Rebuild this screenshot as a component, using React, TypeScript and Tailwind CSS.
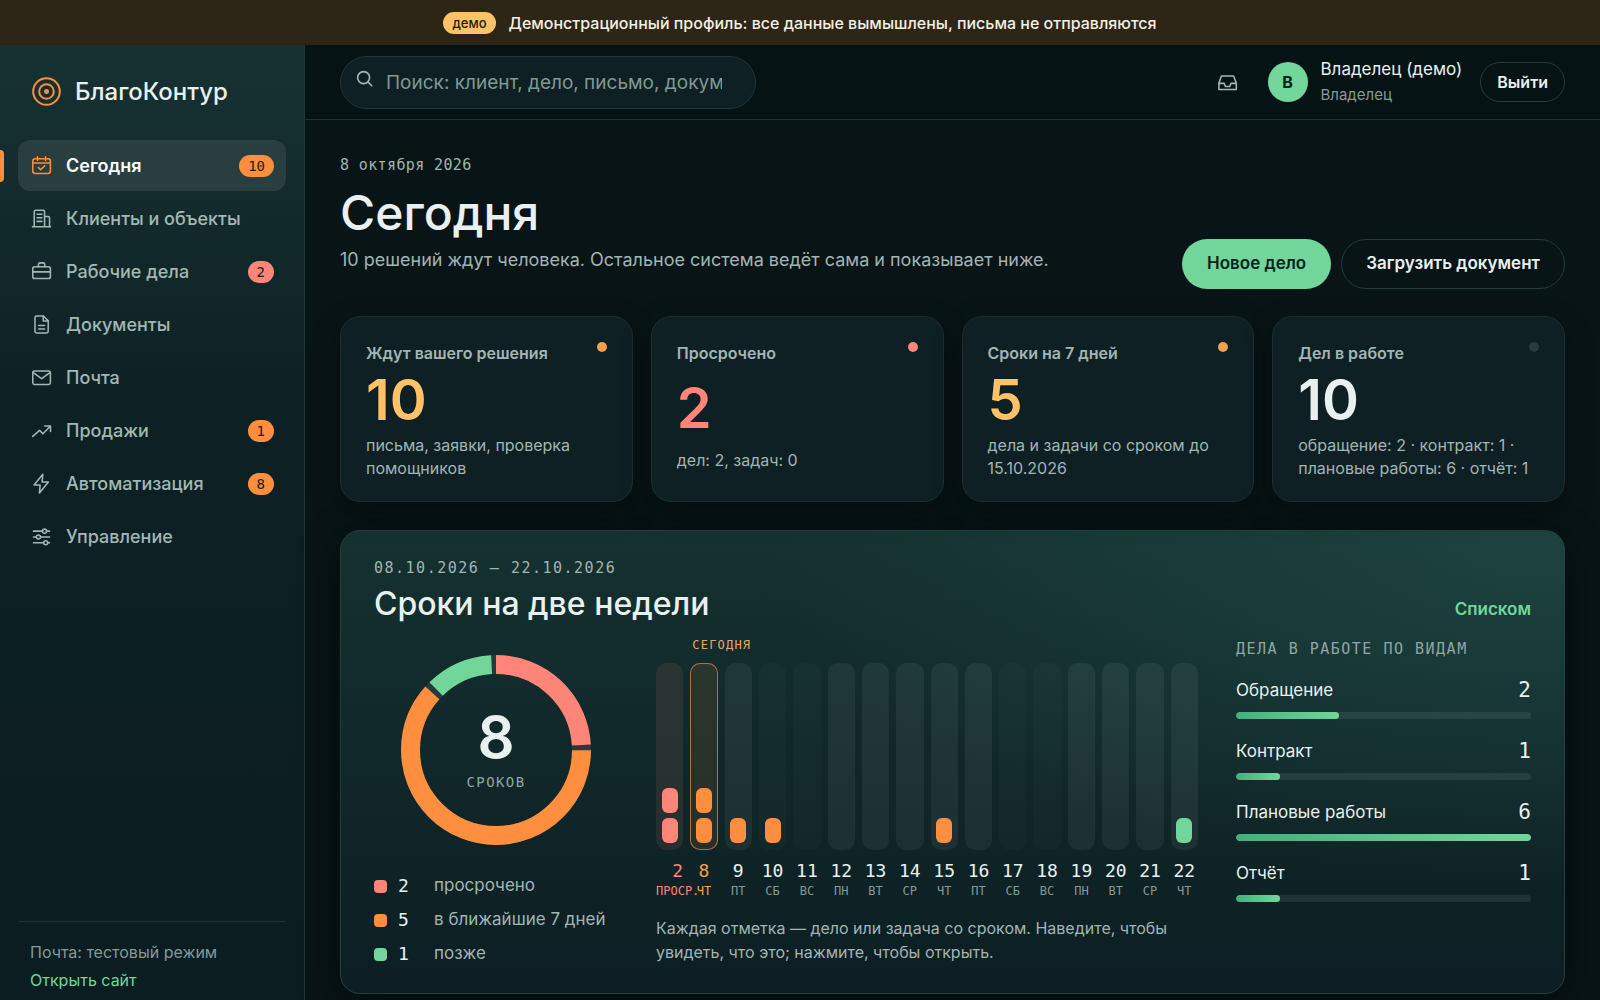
import React from 'react'
import clsx from 'clsx'

const MONO = "font-['DejaVu_Sans_Mono',monospace]"

type IconName = 'calendar' | 'building' | 'briefcase' | 'document' | 'mail' | 'trend' | 'bolt' | 'sliders' | 'inbox'

const icons: Record<IconName, React.ReactNode> = {
  calendar: (
    <>
      <rect x="2.9" y="5" width="18.4" height="15.4" rx="2.6" />
      <path d="M2.9 9.4h18.4M7.8 2.8v4M16.2 2.8v4M8.8 14.2l2.4 2.3 4.2-4.2" />
    </>
  ),
  building: (
    <>
      <path d="M2.6 20.7h18.8M4.4 20.7V5a1.6 1.6 0 0 1 1.6-1.6h7.6A1.6 1.6 0 0 1 15.2 5v15.7" />
      <path d="M15.2 9.8h3.6a1.6 1.6 0 0 1 1.6 1.6v9.3M7.4 7.5h5M7.4 11.3h5M7.4 15h5" />
    </>
  ),
  briefcase: (
    <>
      <rect x="2.9" y="7" width="18.4" height="12.4" rx="2" />
      <path d="M8.8 7V4.6a1.6 1.6 0 0 1 1.6-1.6h3.4a1.6 1.6 0 0 1 1.6 1.6V7M2.9 12.4h18.4" />
    </>
  ),
  document: (
    <>
      <path d="M14 3.2H7a1.8 1.8 0 0 0-1.8 1.8v14A1.8 1.8 0 0 0 7 20.8h10.2A1.8 1.8 0 0 0 19 19V8.2z" />
      <path d="M13.8 3.2v5.2H19M9 13h6.2M9 16.7h6.2" />
    </>
  ),
  mail: (
    <>
      <rect x="2.9" y="5.2" width="18.4" height="14" rx="1.8" />
      <path d="M3.4 6.8l8.7 6.4 8.7-6.4" />
    </>
  ),
  trend: <path d="M2.8 18.2l7.2-6.4 3.4 3.6 7.8-7.8M15.4 7.4h6v5.6" />,
  bolt: <path d="M13.4 2.4L4.2 13.6h6.4l-.8 8.2 9.4-11.4h-6.6z" />,
  sliders: (
    <>
      <path d="M3.6 6.4h9.4M17.4 6.4h3M3.6 12.6h3M11 12.6h9.4M3.6 18.6h10.6M18.6 18.6h1.8" />
      <circle cx="15.2" cy="6.4" r="2.1" />
      <circle cx="8.8" cy="12.6" r="2.1" />
      <circle cx="16.4" cy="18.6" r="2.1" />
    </>
  ),
  inbox: (
    <>
      <path d="M3 12.9L5.6 5.2h12.8L21.2 12.9v6.3H3z" />
      <path d="M3 12.9h5.6l1.2 3.2h4.6l1.2-3.2h5.6" />
    </>
  ),
}

function Icon({ name }: { name: IconName }) {
  return (
    <svg className="size-[23px] shrink-0" viewBox="0 0 24 24" fill="none" stroke="currentColor" strokeWidth="1.6" strokeLinecap="round" strokeLinejoin="round" aria-hidden="true">
      {icons[name]}
    </svg>
  )
}

interface NavItem {
  icon: IconName
  label: string
  count?: number
  urgent?: boolean
  active?: boolean
}

const nav: NavItem[] = [
  { icon: 'calendar', label: 'Сегодня', count: 10, active: true },
  { icon: 'building', label: 'Клиенты и объекты' },
  { icon: 'briefcase', label: 'Рабочие дела', count: 2, urgent: true },
  { icon: 'document', label: 'Документы' },
  { icon: 'mail', label: 'Почта' },
  { icon: 'trend', label: 'Продажи', count: 1 },
  { icon: 'bolt', label: 'Автоматизация', count: 8 },
  { icon: 'sliders', label: 'Управление' },
]

const stats = [
  { label: 'Ждут вашего решения', value: 10, note: 'письма, заявки, проверка помощников', color: 'text-[#ffc266]', dot: 'bg-[#f3a04c]' },
  { label: 'Просрочено', value: 2, note: 'дел: 2, задач: 0', color: 'text-[#ff8578]', dot: 'bg-[#ff8578]' },
  { label: 'Сроки на 7 дней', value: 5, note: 'дела и задачи со сроком до 15.10.2026', color: 'text-[#ffc266]', dot: 'bg-[#f3a04c]' },
  { label: 'Дел в работе', value: 10, note: 'обращение: 2 · контракт: 1 · плановые работы: 6 · отчёт: 1', color: 'text-[#e8f1ef]', dot: 'bg-[#263b3e]' },
]

const RADIUS = 85.5
const RING = 2 * Math.PI * RADIUS

// start and length are shares of the ring, each segment leaves a 1% gap
const segments = [
  { value: 2, label: 'просрочено', start: 0, length: 0.24, stroke: 'stroke-[#ff8578]', bg: 'bg-[#ff8578]' },
  { value: 5, label: 'в ближайшие 7 дней', start: 0.25, length: 0.615, stroke: 'stroke-[#ff8f3f]', bg: 'bg-[#ff8f3f]' },
  { value: 1, label: 'позже', start: 0.875, length: 0.115, stroke: 'stroke-[#72d69b]', bg: 'bg-[#72d69b]' },
]

interface Day {
  num: number
  name: string
  marks: number
  kind?: 'overdue' | 'today' | 'weekend' | 'later'
}

const days: Day[] = [
  { num: 2, name: 'ПРОСР.', marks: 2, kind: 'overdue' },
  { num: 8, name: 'ЧТ', marks: 2, kind: 'today' },
  { num: 9, name: 'ПТ', marks: 1 },
  { num: 10, name: 'СБ', marks: 1, kind: 'weekend' },
  { num: 11, name: 'ВС', marks: 0, kind: 'weekend' },
  { num: 12, name: 'ПН', marks: 0 },
  { num: 13, name: 'ВТ', marks: 0 },
  { num: 14, name: 'СР', marks: 0 },
  { num: 15, name: 'ЧТ', marks: 1 },
  { num: 16, name: 'ПТ', marks: 0 },
  { num: 17, name: 'СБ', marks: 0, kind: 'weekend' },
  { num: 18, name: 'ВС', marks: 0, kind: 'weekend' },
  { num: 19, name: 'ПН', marks: 0 },
  { num: 20, name: 'ВТ', marks: 0 },
  { num: 21, name: 'СР', marks: 0 },
  { num: 22, name: 'ЧТ', marks: 1, kind: 'later' },
]

const kinds = [
  { label: 'Обращение', value: 2, percent: 35 },
  { label: 'Контракт', value: 1, percent: 15 },
  { label: 'Плановые работы', value: 6, percent: 100 },
  { label: 'Отчёт', value: 1, percent: 15 },
]

function Sidebar() {
  return (
    <aside className="flex w-[305px] shrink-0 flex-col border-r border-[#223739] bg-linear-to-b from-[#173232] via-[#0d2024] via-40% to-[#0b1d21] px-[18px] pb-[6px]">
      <a href="#" className="flex h-[95px] items-center gap-[14px] pb-[2px] pl-[14px] text-[#e8f1ef]">
        <svg className="size-[29px] text-[#ff8f3f]" viewBox="0 0 29 29" fill="none" stroke="currentColor" strokeWidth="2" aria-hidden="true">
          <circle cx="14.5" cy="14.5" r="13.3" />
          <circle cx="14.5" cy="14.5" r="7.3" />
          <circle cx="14.5" cy="14.5" r="2.5" fill="currentColor" stroke="none" />
        </svg>
        <span className="text-2xl font-medium">БлагоКонтур</span>
      </a>

      <nav className="flex flex-col gap-[2px]">
        {nav.map((item) => (
          <a
            key={item.label}
            href="#"
            className={clsx('relative flex h-[51px] items-center gap-[13px] rounded-xl px-3 text-lg', item.active ? 'bg-[#283e3f] font-semibold text-white' : 'font-medium text-[#a2b8b5]')}
          >
            {item.active && <span className="absolute top-[10px] -left-[18px] h-8 w-1 rounded-r bg-[#ff8f3f]" />}
            <span className={item.active ? 'text-[#ff8f3f]' : ''}><Icon name={item.icon} /></span>
            <span className="flex-1">{item.label}</span>
            {item.count && (
              <span className={clsx(MONO, 'rounded-full px-[9px] text-sm leading-[22px] font-normal text-[#1c1a14]', item.urgent ? 'bg-[#ff8578]' : 'bg-[#ff8f3f]')}>
                {item.count}
              </span>
            )}
          </a>
        ))}
      </nav>

      <div className="mt-auto border-t border-[#1e3235] px-3 pt-4 text-base leading-7 text-[#839a98]">
        <p>Почта: тестовый режим</p>
        <a href="#" className="text-[#72d69b]">Открыть сайт</a>
      </div>
    </aside>
  )
}

function TopBar() {
  return (
    <header className="flex h-[75px] items-center justify-between border-b border-[#1e3133] bg-[#061315] px-[35px]">
      <form className="relative w-[416px]">
        <label htmlFor="search" className="absolute top-[14px] left-[16px] text-[#a2b8b5]">
          <svg className="size-[18px]" viewBox="0 0 18 18" fill="none" stroke="currentColor" strokeWidth="1.6" strokeLinecap="round" aria-hidden="true">
            <circle cx="7.6" cy="7.6" r="6" />
            <path d="M12 12l3.8 3.8" />
          </svg>
        </label>
        <input
          id="search"
          type="text"
          placeholder="Поиск: клиент, дело, письмо, документ"
          className="h-[53px] w-full rounded-full border border-[#20363a] bg-[#0f2024] pr-[33px] pl-[45px] text-[19px] text-[#e8f1ef] placeholder:text-[#7f9996]"
        />
      </form>

      <div className="flex items-center gap-[18px]">
        <button type="button" aria-label="Входящие" className="grid size-11 place-items-center text-[#a2b8b5]">
          <Icon name="inbox" />
        </button>
        <div className="flex items-center gap-[13px]">
          <span className="grid size-10 place-items-center rounded-full bg-[#72d69b] text-base font-bold text-[#06231a]">В</span>
          <div>
            <p className="text-[17px] leading-[26px] text-[#e8f1ef]">Владелец (демо)</p>
            <p className="text-[15px] leading-[26px] text-[#839a98]">Владелец</p>
          </div>
        </div>
        <button type="button" className="h-10 rounded-full border border-[#263b3e] px-4 text-base font-semibold text-[#e8f1ef]">Выйти</button>
      </div>
    </header>
  )
}

function Donut() {
  return (
    <div className="flex flex-col pt-[18px]">
      <div className="relative mx-auto size-[190px]">
        <svg className="size-full -rotate-90" viewBox="0 0 190 190" fill="none" strokeWidth="19" aria-hidden="true">
          <circle cx="95" cy="95" r={RADIUS} className="stroke-[#263a3d]" />
          {segments.map((s) => (
            <circle key={s.label} cx="95" cy="95" r={RADIUS} strokeDasharray={`${s.length * RING} 1000`} strokeDashoffset={-s.start * RING} className={s.stroke} />
          ))}
        </svg>
        <div className="absolute inset-0 flex flex-col items-center justify-center gap-1">
          <span className="text-[58px] leading-[60px] font-semibold text-[#e8f1ef]">8</span>
          <span className={clsx(MONO, 'text-sm leading-[22px] tracking-widest text-[#8fa6a3]')}>СРОКОВ</span>
        </div>
      </div>
      <ul className="mt-6 flex flex-col">
        {segments.map((s) => (
          <li key={s.label} className="flex h-[34px] items-center text-[17px] text-[#a2b5b3]">
            <span className={clsx('size-[13px] rounded', s.bg)} />
            <span className={clsx(MONO, 'ml-[11px] w-9 text-lg text-[#e8f1ef]')}>{s.value}</span>
            {s.label}
          </li>
        ))}
      </ul>
    </div>
  )
}

function DayColumn({ day }: { day: Day }) {
  const { kind } = day
  return (
    <li className="relative flex min-w-0 flex-1 flex-col">
      {kind === 'today' && (
        <span className={clsx(MONO, 'absolute -top-[26px] left-[2px] text-xs leading-4 tracking-widest text-[#eba468]')}>СЕГОДНЯ</span>
      )}
      <div
        className={clsx(
          'flex h-[187px] flex-col items-center justify-end gap-[5px] rounded-[10px] pb-[7px]',
          kind === 'overdue' && 'bg-[#ff8578]/10',
          kind === 'today' && 'bg-[#ff8f3f]/10 ring-1 ring-[#b3713c] ring-inset',
          kind === 'weekend' && 'bg-white/2',
          (!kind || kind === 'later') && 'bg-white/6',
        )}
      >
        {Array.from({ length: day.marks }, (_, i) => (
          <a
            key={i}
            href="#"
            className={clsx('h-[25px] w-4 rounded-md', kind === 'overdue' ? 'bg-[#ff8578]' : kind === 'later' ? 'bg-[#72d69b]' : 'bg-[#ff8f3f]')}
          />
        ))}
      </div>
      <div
        className={clsx(
          MONO,
          'mt-[10px] text-center',
          kind === 'overdue' && 'w-max text-[#ff8578]',
          kind === 'today' && 'text-[#f3a04c]',
        )}
      >
        <p className={clsx('text-lg leading-[22px]', kind !== 'overdue' && kind !== 'today' && 'text-[#e8f1ef]')}>{day.num}</p>
        <p className={clsx('text-xs leading-[18px]', kind !== 'overdue' && kind !== 'today' && 'text-[#839a98]')}>{day.name}</p>
      </div>
    </li>
  )
}

function Deadlines() {
  return (
    <section className="mt-7 rounded-[20px] border border-[#25403f] bg-[radial-gradient(ellipse_65%_75%_at_100%_0%,#1d4340,transparent),linear-gradient(to_bottom,#153130,#0c1e23)] px-[33px] pt-[25px] pb-[22px] shadow-[0_10px_40px_rgba(0,0,0,0.4)]">
      <div className="flex items-end justify-between">
        <div>
          <p className={clsx(MONO, 'text-[15px] leading-6 tracking-widest text-[#a2b5b3]')}>08.10.2026 – 22.10.2026</p>
          <h2 className="mt-[5px] text-[32px] leading-[38px] font-medium text-[#e8f1ef]">Сроки на две недели</h2>
        </div>
        <a href="#" className="text-[17px] leading-7 font-semibold text-[#72d69b]">Списком</a>
      </div>

      <div className="mt-[14px] grid grid-cols-[244px_1fr_295px] gap-x-[38px]">
        <Donut />

        <div className="pt-[26px]">
          <ul className="flex gap-[7px]">
            {days.map((d) => <DayColumn key={d.num + d.name} day={d} />)}
          </ul>
          <p className="mt-4 max-w-[520px] text-base leading-6 text-[#a2b5b3]">
            Каждая отметка — дело или задача со сроком. Наведите, чтобы увидеть, что это; нажмите, чтобы открыть.
          </p>
        </div>

        <div>
          <h3 className={clsx(MONO, 'text-[15px] leading-6 tracking-widest text-[#8fa6a3]')}>ДЕЛА В РАБОТЕ ПО ВИДАМ</h3>
          <ul className="mt-[15px] flex flex-col gap-[18px]">
            {kinds.map((k) => (
              <li key={k.label}>
                <div className="flex items-center justify-between text-[#e8f1ef]">
                  <span className="text-[17px] leading-7">{k.label}</span>
                  <span className={clsx(MONO, 'text-[21px] leading-7')}>{k.value}</span>
                </div>
                <div className="mt-2 h-[7px] overflow-hidden rounded-full bg-white/8">
                  <div className="h-full rounded-full bg-linear-to-r from-[#43b07c] to-[#72d69b]" style={{ width: `${k.percent}%` }} />
                </div>
              </li>
            ))}
          </ul>
        </div>
      </div>
    </section>
  )
}

export default function App() {
  return (
    <div className="flex min-h-screen flex-col bg-[#081416] font-['Inter',sans-serif]">
      <div className="flex h-[45px] items-center justify-center gap-[13px] bg-[#2d2616] text-base font-medium text-[#f3efe4]">
        <span className="rounded-full bg-[#ffc266] px-[9px] text-[13px] leading-[22px] text-[#1c1a14]">демо</span>
        Демонстрационный профиль: все данные вымышлены, письма не отправляются
      </div>

      <div className="flex flex-1">
        <Sidebar />
        <div className="min-w-0 flex-1">
          <TopBar />
          <main className="px-[35px] pt-[33px] pb-[5px]">
            <div className="flex items-end justify-between">
              <div>
                <p className={clsx(MONO, 'text-[15px] leading-6 tracking-wide text-[#a2b5b3]')}>8 октября 2026</p>
                <h1 className="mt-[9px] text-5xl leading-[54px] font-medium text-[#e8f1ef]">Сегодня</h1>
                <p className="mt-[6px] mb-[15px] text-lg leading-7 text-[#a2b5b3]">10 решений ждут человека. Остальное система ведёт сама и показывает ниже.</p>
              </div>
              <div className="flex gap-[10px] text-[17px] font-semibold">
                <button type="button" className="h-[50px] rounded-full bg-[#72d69b] px-[25px] text-[#06231a]">Новое дело</button>
                <button type="button" className="h-[50px] rounded-full border border-[#263b3e] px-6 text-[#e8f1ef]">Загрузить документ</button>
              </div>
            </div>

            <div className="mt-[27px] grid grid-cols-4 gap-[18px]">
              {stats.map((s) => (
                <article key={s.label} className="relative grid gap-2 rounded-[20px] border border-[#1b2e31] bg-[#0f2024] px-[25px] pt-[23px] pb-[21px] shadow-[0_10px_30px_rgba(0,0,0,0.25)]">
                  <span className={clsx('absolute top-[25px] right-[25px] size-[10px] rounded-full', s.dot)} />
                  <h2 className="text-base leading-[26px] font-semibold text-[#a2b5b3]">{s.label}</h2>
                  <p className={clsx('text-[56px] leading-[52px] font-semibold', s.color)}>{s.value}</p>
                  <p className="text-base leading-[23px] text-[#a2b5b3]">{s.note}</p>
                </article>
              ))}
            </div>

            <Deadlines />
          </main>
        </div>
      </div>
    </div>
  )
}
